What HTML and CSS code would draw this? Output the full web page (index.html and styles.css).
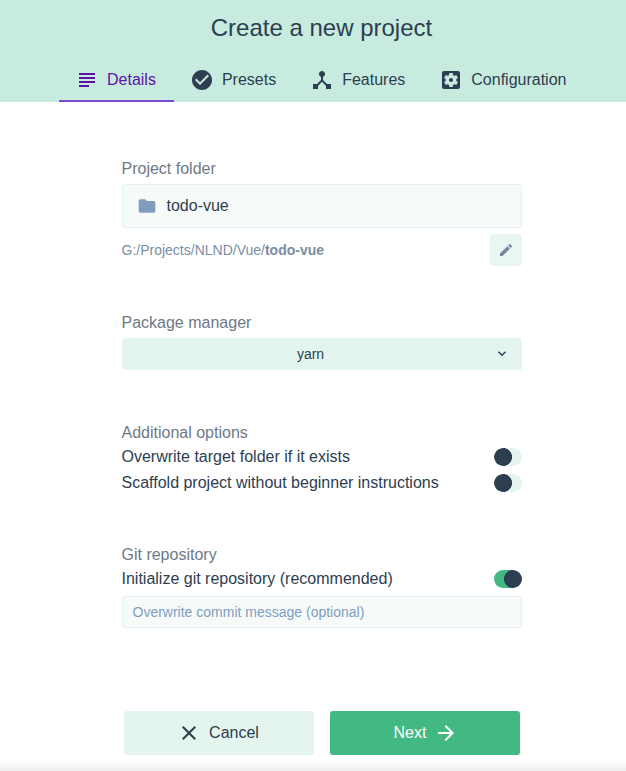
FILE: index.html
```html
<!DOCTYPE html>
<html lang="en">
<head>
<meta charset="utf-8">
<title>Create a new project</title>
<link rel="stylesheet" href="styles.css">
</head>
<body>
<header class="header">
  <h1 class="title">Create a new project</h1>
  <nav class="tabs">
    <a class="tab active"><svg class="icon" viewBox="0 0 24 24"><path d="M14 17H4v2h10v-2zm6-8H4v2h16V9zM4 15h16v-2H4v2zM4 5v2h16V5H4z"/></svg><span>Details</span></a>
    <a class="tab"><svg class="icon" viewBox="0 0 24 24"><path d="M12 2C6.48 2 2 6.48 2 12s4.480 10 10 10 10-4.480 10-10S17.520 2 12 2zm-2 15l-5-5 1.410-1.410L10 14.170l7.590-7.590L19 8l-9 9z"/></svg><span>Presets</span></a>
    <a class="tab"><svg class="icon" viewBox="0 0 24 24"><path d="M17 16l-4-4V8.820C14.160 8.400 15 7.300 15 6c0-1.660-1.340-3-3-3S9 4.340 9 6c0 1.300.840 2.400 2 2.820V12l-4 4H3v5h5v-3.050l4-4.200 4 4.200V21h5v-5h-4z"/></svg><span>Features</span></a>
    <a class="tab"><svg class="icon" viewBox="0 0 24 24"><path d="M12 10c-1.100 0-2 .9-2 2s.9 2 2 2 2-.9 2-2-.9-2-2-2zm7-7H5c-1.110 0-2 .9-2 2v14c0 1.100.890 2 2 2h14c1.110 0 2-.9 2-2V5c0-1.100-.890-2-2-2zm-1.750 9c0 .230-.020.460-.050.680l1.480 1.160c.130.110.170.300.080.450l-1.400 2.420c-.090.150-.270.210-.430.150l-1.740-.700c-.360.280-.760.510-1.180.690l-.260 1.850c-.030.170-.180.300-.350.300h-2.800c-.170 0-.320-.130-.350-.290l-.260-1.850c-.430-.180-.820-.410-1.180-.690l-1.740.700c-.160.060-.340 0-.430-.150l-1.400-2.420c-.090-.150-.050-.340.080-.450l1.480-1.160c-.030-.230-.050-.460-.050-.690s.020-.460.050-.680l-1.480-1.160c-.130-.110-.170-.300-.080-.450l1.400-2.420c.090-.150.270-.210.430-.150l1.740.700c.360-.280.760-.510 1.180-.690l.260-1.850c.030-.170.180-.300.350-.300h2.800c.170 0 .320.130.350.290l.260 1.850c.430.180.820.410 1.180.690l1.740-.700c.160-.060.340 0 .430.150l1.400 2.420c.090.150.050.340-.080.450l-1.480 1.160c.030.230.050.460.050.690z"/></svg><span>Configuration</span></a>
  </nav>
</header>
<main class="form">
  <section class="field folder-field">
    <h2 class="label">Project folder</h2>
    <div class="folder"><svg class="icon" viewBox="0 0 24 24"><path d="M10 4H4c-1.100 0-1.990.9-1.990 2L2 18c0 1.100.9 2 2 2h16c1.100 0 2-.9 2-2V8c0-1.100-.9-2-2-2h-8l-2-2z"/></svg><span>todo-vue</span></div>
    <div class="path-row">
      <div class="path">G:/Projects/NLND/Vue/<b>todo-vue</b></div>
      <button class="edit" aria-label="Edit"><svg class="icon" viewBox="0 0 24 24"><path d="M3 17.250V21h3.750L17.810 9.940l-3.750-3.750L3 17.250zM20.710 7.040c.390-.390.390-1.020 0-1.410l-2.340-2.340c-.390-.390-1.020-.390-1.410 0l-1.830 1.830 3.750 3.750 1.830-1.830z"/></svg></button>
    </div>
  </section>
  <section class="field manager-field">
    <h2 class="label">Package manager</h2>
    <div class="select"><span>yarn</span><svg class="icon" viewBox="0 0 24 24"><path d="M7.410 7.840L12 12.420l4.590-4.580L18 9.250l-6 6-6-6z"/></svg></div>
  </section>
  <section class="field options-field">
    <h2 class="label">Additional options</h2>
    <div class="option"><span>Overwrite target folder if it exists</span><i class="switch"></i></div>
    <div class="option"><span>Scaffold project without beginner instructions</span><i class="switch"></i></div>
  </section>
  <section class="field git-field">
    <h2 class="label">Git repository</h2>
    <div class="option"><span>Initialize git repository (recommended)</span><i class="switch on"></i></div>
    <div class="input">Overwrite commit message (optional)</div>
  </section>
</main>
<footer class="actions">
  <button class="button cancel"><svg class="icon" viewBox="0 0 24 24"><path d="M19 6.410L17.590 5 12 10.590 6.410 5 5 6.410 10.590 12 5 17.590 6.410 19 12 13.410 17.590 19 19 17.590 13.410 12z"/></svg><span>Cancel</span></button>
  <button class="button next"><span>Next</span><svg class="icon" viewBox="0 0 24 24"><path d="M12 4l-1.410 1.410L16.170 11H4v2h12.170l-5.580 5.590L12 20l8-8z"/></svg></button>
</footer>
</body>
</html>
```

FILE: styles.css
```css
* { box-sizing: border-box; }
body {
  margin: 0;
  height: 771px;
  display: flex;
  flex-direction: column;
  overflow: hidden;
  font: 16px/22px "Liberation Sans", Arial, sans-serif;
  color: #2c3e50;
  background: linear-gradient(#fff, #ededed) bottom / 100% 11px no-repeat #fff;
}
.icon { width: 24px; height: 24px; fill: currentColor; flex: none; }
.header { height: 102px; background: #c8ebdf; flex: none; }
.title {
  margin: 0;
  padding: 12px 0 0 17px;
  height: 58px;
  font-size: 24px;
  font-weight: 400;
  line-height: 32px;
  text-align: center;
}
.tabs { display: flex; height: 44px; padding-left: 59px; }
.tab {
  display: flex;
  align-items: center;
  gap: 8px;
  padding: 2px 18px 0 16px;
  border-bottom: 2px solid transparent;
}
.tab.active { color: #5c12a8; border-color: #7e4bce; }
.form { width: 400px; margin-left: 122px; flex: none; }
.label {
  margin: 0;
  font-size: 16px;
  font-weight: 400;
  line-height: 22px;
  color: #6e7986;
}
.label, .option span, .path { margin-left: -0.5px; }
.folder-field { padding-top: 56px; }
.folder {
  display: flex;
  align-items: center;
  height: 44px;
  margin-top: 4px;
  padding: 0 14px;
  gap: 9.5px;
  border: 1px solid #e4f3ee;
  border-radius: 3px;
  background: #f6fbfa;
}
.folder .icon { width: 20px; height: 20px; color: #819dbe; }
.path-row { display: flex; justify-content: space-between; align-items: center; margin-top: 6px; height: 32px; }
.path { font-size: 14px; color: #7a8ea2; }
.edit {
  display: flex;
  align-items: center;
  justify-content: center;
  width: 32px;
  height: 32px;
  padding: 0;
  border: 0;
  border-radius: 3px;
  background: #e9f6f2;
  color: #74879b;
}
.edit .icon { width: 16px; height: 16px; }
.manager-field { padding-top: 46px; }
.select {
  display: grid;
  grid-template-columns: 1fr 16px;
  align-items: center;
  height: 32px;
  margin-top: 4px;
  padding: 0 12px 0 5px;
  border-radius: 3px;
  background: #e4f4ee;
  font-size: 14px;
  text-align: center;
}
.select .icon { width: 16px; height: 16px; }
.options-field { padding-top: 52px; }
.option { display: flex; align-items: center; justify-content: space-between; height: 26px; }
.switch {
  width: 28px;
  height: 18px;
  border-radius: 9px;
  background: radial-gradient(circle at 9px 9px, #2c3e50 8.7px, #e4f4ee 9.3px);
}
.switch.on { background: radial-gradient(circle at 19px 9px, #2c3e50 8.7px, #42b983 9.3px); }
.git-field { padding-top: 48px; }
.input {
  height: 32px;
  margin-top: 4px;
  padding: 0 9.5px;
  border: 1px solid #e4f3ee;
  border-radius: 2px;
  background: #f6fbfa;
  font-size: 14px;
  line-height: 30px;
  color: #819dbe;
}
.actions { display: flex; gap: 16px; margin: 83px 0 0 124px; }
.button {
  display: flex;
  align-items: center;
  justify-content: center;
  gap: 8px;
  width: 190px;
  height: 44px;
  padding: 0;
  border: 0;
  border-radius: 3px;
  font: inherit;
}
.cancel { padding-right: 2px; background: #e4f4ee; color: #2c3e50; }
.next { padding-left: 2px; background: #42b983; color: #fff; }
```
